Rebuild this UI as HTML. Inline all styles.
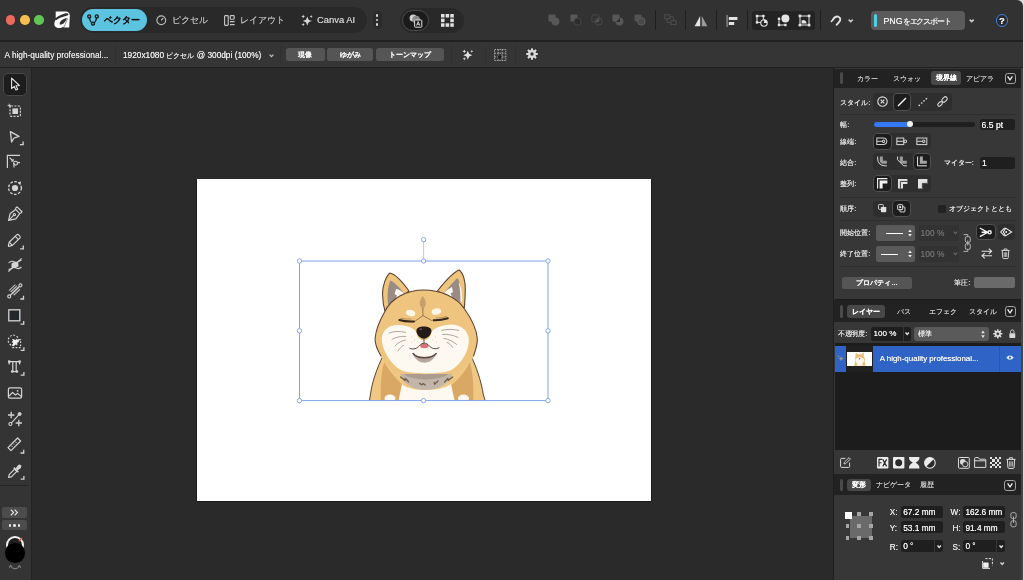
<!DOCTYPE html>
<html lang="ja">
<head>
<meta charset="utf-8">
<title>Affinity</title>
<style>
*{box-sizing:border-box;margin:0;padding:0}
html,body{width:1024px;height:580px;overflow:hidden;background:#2a2a2a}
body{position:relative;font-family:"Liberation Sans",sans-serif;font-size:7.4px;color:#dcdcdc;line-height:1}
.a{position:absolute}
.t{position:absolute;white-space:nowrap;line-height:10px;height:10px;text-shadow:0 0 .45px}
svg{position:absolute;overflow:visible}
/* top bars */
#titlebar{left:0;top:0;width:1022.6px;height:40px;background:#323232;border-top-right-radius:6px}
#sep1{left:0;top:40px;width:1022.6px;height:1.8px;background:#202020}
#ctxbar{left:0;top:41.8px;width:1022.6px;height:25.2px;background:#353535}
#sep2{left:0;top:66.6px;width:1022.6px;height:1.4px;background:#202020}
#edge{left:1016px;top:0;width:8px;height:580px;background:#dcdce2}
/* left tools */
#tools{left:0;top:68px;width:32px;height:512px;background:#343434;border-right:1px solid #222}
/* right panels */
#rp{left:833px;top:68px;width:189.6px;height:512px;background:#373737;border-left:1.6px solid #1e1e1e}
.tabbar{left:834px;width:188.6px;background:#222}
.seltab{background:#484848;border-radius:3px}
.grip{width:3px;background:#4a4a4a;border-radius:1.5px}
.colbtn{width:11.5px;height:11px;border:1.1px solid #a4a4a4;border-radius:2.8px}
.hr{left:840px;width:176px;height:1px;background:#2e2e2e}
.grp{background:#2e2e2e;border-radius:4px}
.selb{background:#1d1d1d;border:1px solid #505050;border-radius:4px}
.vbox{background:#1f1f1f;border-radius:2.5px}
.btn{background:#585858;border-radius:2.5px}
.lbl{color:#e6e6e6}
</style>
</head>
<body>
<div id="root" style="position:absolute;left:0;top:0;width:1024px;height:580px;will-change:transform">
<!-- ===== bars ===== -->
<div class="a" id="edge"></div>
<div class="a" id="titlebar"></div>
<div class="a" id="sep1"></div>
<div class="a" id="ctxbar"></div>
<div class="a" id="sep2"></div>

<!-- traffic lights -->
<div class="a" style="left:5.8px;top:15.3px;width:9.6px;height:9.6px;border-radius:50%;background:#ec6a5e"></div>
<div class="a" style="left:20px;top:15.3px;width:9.6px;height:9.6px;border-radius:50%;background:#f4bf4f"></div>
<div class="a" style="left:34.3px;top:15.3px;width:9.6px;height:9.6px;border-radius:50%;background:#61c554"></div>
<!-- logo -->
<svg style="left:54.2px;top:11.2px" width="17" height="17" viewBox="0 0 17 17"><path d="M1.7 0.6 L11 0.4 C14.6 0.4 16.1 2.4 15.8 5.5 L15.2 16.6 L9.9 16.6 L9.4 15.8 C7.5 17.1 5 17.3 3 16.7 C0.5 15.9 -0.2 13.4 0.7 11 C1.2 9.4 1.8 8.2 2.6 7.2 L1.7 7.2 Z" fill="#fff"/><path d="M0.8 8 C4 4.6 10 2 13.4 2.2 C14.8 2.4 14.6 3.8 13.4 4.4 C9 5.4 4.5 7.2 2.2 9.2 Z" fill="#323232"/><path d="M5.6 12.6 C5.8 10 9.6 7.6 13 7 C12.2 10 10 12.8 7.4 13.6 C6.2 13.9 5.5 13.4 5.6 12.6 Z" fill="#323232"/><path d="M13.8 7.2 L9.8 16.6" stroke="#323232" stroke-width="0.5" fill="none"/></svg>
<!-- persona pill -->
<div class="a" style="left:79.5px;top:7px;width:287px;height:26px;border-radius:13px;background:#292929"></div>
<div class="a" style="left:81.5px;top:9px;width:65px;height:22px;border-radius:11px;background:#5cc4e0"></div>
<svg style="left:87px;top:14px" width="12" height="12" viewBox="0 0 12 12" fill="none" stroke="#1c1c1c" stroke-width="1.4"><circle cx="2.2" cy="2.4" r="1.5"/><circle cx="9.8" cy="2.4" r="1.5"/><circle cx="6" cy="9.6" r="1.5"/><path d="M2.4 4 Q3 7.5 4.8 8.8 M9.6 4 Q9 7.5 7.2 8.8"/></svg>
<div class="t" style="left:103.5px;top:15px;font-size:8.6px;font-weight:bold;color:#151515">ベクター</div>
<svg style="left:156px;top:15px" width="10.5" height="10.5" viewBox="0 0 11 11" fill="none" stroke="#bcbcbc" stroke-width="1.2"><circle cx="5.5" cy="5.5" r="4.6"/><path d="M5.5 5.5 L7.6 3.2"/></svg>
<div class="t" style="left:172px;top:15px;font-size:8.5px;color:#b4b4b4">ピクセル</div>
<svg style="left:224px;top:14.5px" width="11" height="11" viewBox="0 0 11 11" fill="none" stroke="#c8c8c8" stroke-width="1.1"><rect x="0.6" y="0.6" width="3.6" height="9.8" rx="0.6"/><rect x="6.2" y="0.6" width="4" height="3.6" rx="0.6"/><path d="M6 6.6 H10.6 M6 9.6 H10.6"/></svg>
<div class="t" style="left:240px;top:15px;font-size:8.5px;color:#b4b4b4">レイアウト</div>
<svg style="left:300.5px;top:14.5px" width="12" height="12" viewBox="0 0 12 12" fill="#d6d6d6"><path d="M6.30 1.60 L7.61 4.69 L10.70 6.00 L7.61 7.31 L6.30 10.40 L4.99 7.31 L1.90 6.00 L4.99 4.69 Z"/><path d="M2.20 -0.50 L2.79 0.91 L4.20 1.50 L2.79 2.09 L2.20 3.50 L1.61 2.09 L0.20 1.50 L1.61 0.91 Z"/><path d="M10.20 0.00 L10.65 1.05 L11.70 1.50 L10.65 1.95 L10.20 3.00 L9.75 1.95 L8.70 1.50 L9.75 1.05 Z"/><path d="M2.20 8.00 L2.68 9.12 L3.80 9.60 L2.68 10.08 L2.20 11.20 L1.72 10.08 L0.60 9.60 L1.72 9.12 Z"/></svg>
<div class="t" style="left:317px;top:15px;font-size:9.4px;color:#c8c8c8">Canva AI</div>
<!-- kebab -->
<div class="a" style="left:372.5px;top:11px;width:9px;height:18px;border-radius:4.5px;background:#2a2a2a"></div>
<div class="a" style="left:375.6px;top:14px;width:2.8px;height:2.8px;border-radius:50%;background:#d8d8d8"></div>
<div class="a" style="left:375.6px;top:18.6px;width:2.8px;height:2.8px;border-radius:50%;background:#d8d8d8"></div>
<div class="a" style="left:375.6px;top:23.2px;width:2.8px;height:2.8px;border-radius:50%;background:#d8d8d8"></div>
<!-- second pill -->
<div class="a" style="left:399.5px;top:7.5px;width:64.5px;height:25px;border-radius:12.5px;background:#292929"></div>
<div class="a" style="left:401.5px;top:9.5px;width:27.5px;height:21.5px;border-radius:10.7px;background:#1b1b1b;border:1px solid #4c4c4c"></div>
<svg style="left:408.5px;top:13.5px" width="14" height="14" viewBox="0 0 14 14"><circle cx="4.2" cy="4" r="3.6" fill="#d0d0d0"/><circle cx="7.2" cy="5.6" r="3.8" fill="#8a8a8a"/><rect x="5.6" y="6" width="7.2" height="7.2" rx="0.8" fill="#1b1b1b" stroke="#e0e0e0" stroke-width="1"/><path d="M7.6 11.6 L9.2 7.6 L10.8 11.6 M8.2 10.3 H10.2" stroke="#e0e0e0" stroke-width="0.9" fill="none"/></svg>
<svg style="left:441px;top:13.8px" width="12.8" height="12.8" viewBox="0 0 13.5 13.5" fill="#e2e2e2"><rect x="0" y="0" width="3.7" height="3.7"/><rect x="4.9" y="0" width="3.7" height="3.7"/><rect x="9.8" y="0" width="3.7" height="3.7"/><rect x="0" y="4.9" width="3.7" height="3.7"/><rect x="9.8" y="4.9" width="3.7" height="3.7"/><rect x="0" y="9.8" width="3.7" height="3.7"/><rect x="4.9" y="9.8" width="3.7" height="3.7"/><rect x="9.8" y="9.8" width="3.7" height="3.7"/></svg>
<!-- disabled boolean ops -->
<svg style="left:548px;top:14px" width="12" height="12" viewBox="0 0 12 12" fill="#585858"><rect x="0.5" y="0.5" width="7" height="7" rx="1"/><circle cx="7.4" cy="7.4" r="4"/></svg>
<svg style="left:569.5px;top:14px" width="12" height="12" viewBox="0 0 12 12"><rect x="0.5" y="0.5" width="7" height="7" rx="1" fill="#585858"/><circle cx="7.6" cy="7.6" r="3.6" fill="#2d2d2d" stroke="#4a4a4a" stroke-width="0.9"/></svg>
<svg style="left:591px;top:14px" width="12" height="12" viewBox="0 0 12 12"><rect x="0.9" y="0.9" width="7" height="7" rx="1" fill="none" stroke="#4c4c4c" stroke-width="0.9"/><circle cx="7.6" cy="7.6" r="3.6" fill="none" stroke="#4c4c4c" stroke-width="0.9"/><path d="M4.2 7.8 L7.8 4.2 V7.8 Z" fill="#5c5c5c"/></svg>
<svg style="left:612px;top:14px" width="12" height="12" viewBox="0 0 12 12"><rect x="0.5" y="0.5" width="7" height="7" rx="1" fill="#585858"/><circle cx="7.4" cy="7.4" r="4" fill="#585858"/><path d="M4 7.9 L7.9 4 V7.9 Z" fill="#2d2d2d"/></svg>
<svg style="left:633.5px;top:14px" width="12" height="12" viewBox="0 0 12 12"><rect x="0.5" y="0.5" width="7" height="7" rx="1" fill="#525252"/><circle cx="7.4" cy="7.4" r="3.8" fill="#4a4a4a" stroke="#606060" stroke-width="0.9"/></svg>
<div class="a" style="left:654.5px;top:10px;width:1px;height:20px;background:#1f1f1f"></div>
<svg style="left:664px;top:14px" width="13" height="12" viewBox="0 0 13 12" fill="none" stroke="#4e4e4e" stroke-width="1"><rect x="0.8" y="0.8" width="5" height="4" /><rect x="7" y="6.6" width="5" height="4"/><path d="M6 2.8 H9.4 V6 M3.2 5 V8.6 H6.6"/></svg>
<div class="a" style="left:685px;top:10px;width:1px;height:20px;background:#1f1f1f"></div>
<svg style="left:694px;top:14.8px" width="14" height="12.4" viewBox="0 0 14 12"><path d="M6.2 0.8 V11 H0.6 Z" fill="#e4e4e4"/><path d="M7.8 0.8 V11 H13.4 Z" fill="#9a9a9a"/></svg>
<div class="a" style="left:716px;top:10px;width:1px;height:20px;background:#1f1f1f"></div>
<svg style="left:726px;top:14.6px" width="12" height="12" viewBox="0 0 12 12" fill="#e4e4e4"><rect x="0.4" y="0" width="1.4" height="12" fill="#8c8c8c"/><rect x="2.8" y="2" width="8.6" height="3"/><rect x="2.8" y="7" width="5.4" height="3"/></svg>
<div class="a" style="left:746.5px;top:10px;width:1px;height:20px;background:#1f1f1f"></div>
<!-- snapping group -->
<div class="a" style="left:752px;top:11px;width:62.5px;height:19px;border-radius:3px;background:#232323"></div>
<svg style="left:754.5px;top:14px" width="13" height="13" viewBox="0 0 13 13"><rect x="2" y="2" width="6.4" height="6.4" fill="none" stroke="#e4e4e4" stroke-width="1"/><g fill="#e4e4e4"><rect x="0.8" y="0.8" width="2.4" height="2.4"/><rect x="7.2" y="0.8" width="2.4" height="2.4"/><rect x="0.8" y="7.2" width="2.4" height="2.4"/></g><circle cx="9" cy="9" r="3.2" fill="#232323" stroke="#e4e4e4" stroke-width="1.1"/><path d="M9 9 L9 5.8 A3.2 3.2 0 0 1 12.2 9 Z" fill="#e4e4e4"/></svg>
<svg style="left:776.5px;top:13.5px" width="13" height="13" viewBox="0 0 13 13"><path d="M2 4.6 V11 H8.4" fill="none" stroke="#e4e4e4" stroke-width="1"/><g fill="#e4e4e4"><rect x="0.8" y="3.6" width="2.4" height="2.4"/><rect x="0.8" y="9.8" width="2.4" height="2.4"/><rect x="7.2" y="9.8" width="2.4" height="2.4"/><circle cx="8.4" cy="4.4" r="4"/></g></svg>
<svg style="left:798px;top:13.5px" width="13" height="13" viewBox="0 0 13 13"><rect x="2" y="2" width="9" height="9" fill="none" stroke="#e4e4e4" stroke-width="1"/><g fill="#e4e4e4"><rect x="0.6" y="0.6" width="2.6" height="2.6"/><rect x="9.8" y="0.6" width="2.6" height="2.6"/><rect x="0.6" y="9.8" width="2.6" height="2.6"/><rect x="9.8" y="9.8" width="2.6" height="2.6"/><path d="M3.6 9.4 V6.4 A3.4 3.4 0 0 1 8.6 9.4 Z"/></g></svg>
<div class="a" style="left:820px;top:10px;width:1px;height:20px;background:#1f1f1f"></div>
<svg style="left:830px;top:14.8px" width="12" height="12" viewBox="0 0 12 12" fill="none" stroke="#e0e0e0" stroke-width="1.9" stroke-linecap="round"><path d="M3 4.6 Q4.8 1 8 1.6 Q11.4 2.8 9.8 6 Q8.6 7.8 6.6 9.8"/><path d="M1.4 6.4 L2.8 5" stroke-width="1.6"/></svg>
<svg style="left:847.5px;top:18.5px" width="5.4" height="3.6" viewBox="0 0 6 4" fill="none" stroke="#d0d0d0" stroke-width="1.7"><path d="M0.8 0.7 L3 3 L5.2 0.7"/></svg>
<!-- export -->
<div class="a" style="left:871px;top:11px;width:93.5px;height:19px;border-radius:4px;background:#5b5b5b"></div>
<div class="a" style="left:874px;top:14px;width:3px;height:13px;border-radius:1.5px;background:#4fd0e6"></div>
<div class="t" style="left:883.5px;top:15.5px;font-size:8.8px;color:#f0f0f0">PNG<span style="font-size:8.2px;letter-spacing:-1.05px">をエクスポート</span></div>
<svg style="left:968.5px;top:18.5px" width="5.4" height="3.6" viewBox="0 0 6 4" fill="none" stroke="#d0d0d0" stroke-width="1.7"><path d="M0.8 0.7 L3 3 L5.2 0.7"/></svg>
<!-- help -->
<div class="a" style="left:995.5px;top:14.3px;width:12.4px;height:12.4px;border-radius:50%;border:1.3px solid #3f7fe6;background:#2a2a2a"></div>
<div class="t" style="left:999px;top:15.6px;font-size:9.5px;font-weight:bold;color:#f0f0f0">?</div>


<div class="t" style="left:4.5px;top:50px;font-size:8.3px;color:#e2e2e2">A high-quality professional...</div>
<div class="a" style="left:115px;top:46px;width:1px;height:18px;background:#2f2f2f"></div>
<div class="t" style="left:123px;top:50px;font-size:8.3px;color:#e8e8e8">1920x1080 <span style="font-size:7.4px">ピクセル</span> @ 300dpi (100%)</div>
<svg style="left:268.5px;top:53.5px" width="5" height="3.5" viewBox="0 0 5 3.5" fill="none" stroke="#c8c8c8" stroke-width="1.1"><path d="M0.6 0.6 L2.5 2.6 L4.4 0.6"/></svg>
<div class="a" style="left:279.5px;top:46px;width:1px;height:18px;background:#2f2f2f"></div>
<div class="a btn" style="left:286px;top:47.5px;width:38.7px;height:13.3px;background:#555"></div>
<div class="t" style="left:286px;top:50px;width:38.7px;text-align:center;font-size:7.3px;font-weight:bold;color:#f0f0f0">現像</div>
<div class="a btn" style="left:327px;top:47.5px;width:46px;height:13.3px;background:#555"></div>
<div class="t" style="left:327px;top:50px;width:46px;text-align:center;font-size:7.3px;font-weight:bold;color:#f0f0f0">ゆがみ</div>
<div class="a btn" style="left:375.5px;top:47.5px;width:68px;height:13.3px;background:#555"></div>
<div class="t" style="left:375.5px;top:50px;width:68px;text-align:center;font-size:7.3px;font-weight:bold;color:#f0f0f0">トーンマップ</div>
<div class="a" style="left:450.5px;top:46px;width:1px;height:18px;background:#2f2f2f"></div>
<svg style="left:460.5px;top:48.5px" width="12" height="12" viewBox="0 0 12 12" fill="#e0e0e0"><path d="M6.80 1.70 L8.14 4.86 L11.30 6.20 L8.14 7.54 L6.80 10.70 L5.46 7.54 L2.30 6.20 L5.46 4.86 Z"/><path d="M3.30 0.40 L3.90 1.70 L5.20 2.30 L3.90 2.90 L3.30 4.20 L2.70 2.90 L1.40 2.30 L2.70 1.70 Z"/><path d="M10.80 0.90 L11.25 1.85 L12.20 2.30 L11.25 2.75 L10.80 3.70 L10.35 2.75 L9.40 2.30 L10.35 1.85 Z"/><path d="M3.30 8.20 L3.81 9.29 L4.90 9.80 L3.81 10.31 L3.30 11.40 L2.79 10.31 L1.70 9.80 L2.79 9.29 Z"/></svg>
<div class="a" style="left:484.5px;top:46px;width:1px;height:18px;background:#2f2f2f"></div>
<svg style="left:493.8px;top:49px" width="12.4" height="12" viewBox="0 0 12.4 12" fill="none" stroke="#a8a8a8" stroke-width="1" stroke-dasharray="1.5 1"><path d="M0.5 0.5 H11.9 V11.5 H0.5 Z M4.3 0.5 V11.5 M8.1 0.5 V11.5 M0.5 4.2 H11.9 M0.5 7.9 H11.9"/><rect x="3.8" y="6.4" width="3.2" height="3.2" fill="#1e1e1e" stroke="none"/></svg>
<div class="a" style="left:514.5px;top:46px;width:1px;height:18px;background:#2f2f2f"></div>
<svg style="left:526px;top:48px" width="12" height="12" viewBox="0 0 12 12"><g fill="#dcdcdc"><circle cx="6" cy="6" r="3.9"/><g id="gt"><rect x="5" y="0.2" width="2" height="11.6" rx="0.5"/></g><rect x="5" y="0.2" width="2" height="11.6" rx="0.5" transform="rotate(45 6 6)"/><rect x="5" y="0.2" width="2" height="11.6" rx="0.5" transform="rotate(90 6 6)"/><rect x="5" y="0.2" width="2" height="11.6" rx="0.5" transform="rotate(135 6 6)"/></g><circle cx="6" cy="6" r="1.7" fill="#323232"/></svg>

<!-- ===== left tools ===== -->
<div class="a" id="tools"></div>

<div class="a" style="left:2.6px;top:72.8px;width:24px;height:23.2px;border-radius:5px;background:#1d1d1d;border:1.2px solid #484848"></div>
<svg style="left:6.7px;top:76.3px" width="16" height="16" viewBox="0 0 16 16"><path d="M4.6 2.2 L4.6 12.6 L7.2 10.4 L8.9 14 L10.7 13.2 L9 9.7 L12.4 9.5 Z" fill="#1d1d1d" stroke="#e2e2e2" stroke-width="1.1" stroke-linejoin="round"/></svg><svg style="left:6.7px;top:102.9px" width="16" height="16" viewBox="0 0 16 16"><rect x="3" y="3" width="10.4" height="10.4" rx="1.2" fill="none" stroke="#d4d4d4" stroke-width="1.2" stroke-dasharray="2 1.3"/><rect x="5.4" y="5.4" width="5.6" height="5.6" fill="#d4d4d4"/><path d="M0.6 2.4 H4 M2.3 0.7 V4.1" stroke="#d4d4d4" stroke-width="0.9"/></svg><svg style="left:6.7px;top:128.7px" width="16" height="16" viewBox="0 0 16 16"><path d="M3.4 2.6 L12 7.4 L7 9 L4.6 13 Z" fill="none" stroke="#d4d4d4" stroke-width="1.3" stroke-linejoin="round"/><path d="M16.1 12.4 V15.6 H12.9" fill="none" stroke="#d4d4d4" stroke-width="1.3"/></svg><svg style="left:4.9px;top:153.2px" width="16" height="16" viewBox="0 0 16 16"><path d="M2.4 15 V2.4 H15" fill="none" stroke="#d4d4d4" stroke-width="1.2"/><path d="M4.6 4.6 L8 8" stroke="#d4d4d4" stroke-width="1.1"/><path d="M8.6 5.6 V8.6 H5.6 Z" fill="#d4d4d4"/><circle cx="10.6" cy="10.2" r="1.9" fill="none" stroke="#d4d4d4" stroke-width="1.1"/><path d="M9 10 V14.6 M12.4 9.6 H15" stroke="#d4d4d4" stroke-width="1.1"/></svg><svg style="left:6.7px;top:179.6px" width="16" height="16" viewBox="0 0 16 16"><circle cx="8" cy="8" r="6.4" fill="none" stroke="#d4d4d4" stroke-width="1.3" stroke-dasharray="2.6 1.5"/><circle cx="8" cy="8" r="3.1" fill="#d4d4d4"/><path d="M10.6 2.2 L14 1.4 L13.4 4.8 Z" fill="#d4d4d4"/></svg><svg style="left:6.7px;top:206.0px" width="16" height="16" viewBox="0 0 16 16"><g fill="none" stroke="#d4d4d4" stroke-width="1.2" stroke-linejoin="round"><path d="M1.6 14.4 L3.2 7.4 L8.6 3.4 L12.8 7.6 L8.8 12.8 Z"/><path d="M1.6 14.4 L6.6 9.4"/><circle cx="7.4" cy="8.6" r="1.1"/><path d="M8.2 2.6 L10 0.9 L15 5.8 L13.4 7.6"/></g></svg><svg style="left:6.7px;top:232.6px" width="16" height="16" viewBox="0 0 16 16"><g fill="none" stroke="#d4d4d4" stroke-width="1.2" stroke-linejoin="round"><path d="M1.4 12.6 L2.2 9.2 L9.6 1.9 Q10.6 1 11.6 1.9 L12.8 3.1 Q13.7 4.1 12.8 5.1 L5.4 12.4 L1.8 13.4 Z"/><path d="M2.4 9.4 L5.2 12.2 M8.2 3.4 L11.2 6.4"/></g><path d="M16.3 12.6 V15.8 H13.1" fill="none" stroke="#d4d4d4" stroke-width="1.3"/></svg><svg style="left:6.7px;top:257.3px" width="16" height="16" viewBox="0 0 16 16"><g fill="none" stroke="#d4d4d4" stroke-width="1.1"><path d="M1.6 6 Q4 3.4 6.2 4.6 Q9 6.2 11 4.6 Q12.6 3.4 14.4 3.4"/><path d="M1.6 12.4 Q3.4 12.6 5 11.2 Q7 9.6 9.8 11.2 Q12 12.4 14.4 10"/><path d="M1.4 14.6 L14.6 1.4" stroke-width="1.2"/></g><path d="M4.6 6.2 Q8 4.6 11.2 6 L11.6 9.6 Q8 11.4 4.4 9.8 Z" fill="#d4d4d4"/></svg><svg style="left:6.7px;top:282.8px" width="16" height="16" viewBox="0 0 16 16"><g stroke="#d4d4d4" fill="none"><path d="M2 7.6 L8.4 1.6 M3.6 9 L10 3 M5.2 10.6 L11.6 4.6 M6.6 12.2 L13 6.2" stroke-width="1.25" opacity="0.8"/><path d="M2.6 13 L13.2 2.6" stroke-width="1.2"/><circle cx="2.2" cy="13.4" r="1.5" fill="#343434" stroke-width="1.1"/><circle cx="13.4" cy="2.4" r="1.5" fill="#343434" stroke-width="1.1"/></g><path d="M16.5 12.8 V16.0 H13.3" fill="none" stroke="#d4d4d4" stroke-width="1.3"/></svg><svg style="left:6.7px;top:308.2px" width="16" height="16" viewBox="0 0 16 16"><rect x="1.8" y="1.8" width="11" height="11" fill="#22282a" stroke="#d4d4d4" stroke-width="1.3"/><path d="M16.7 13.0 V16.2 H13.5" fill="none" stroke="#d4d4d4" stroke-width="1.3"/></svg><svg style="left:6.7px;top:334.2px" width="16" height="16" viewBox="0 0 16 16"><circle cx="6.4" cy="6.4" r="5.2" fill="none" stroke="#d4d4d4" stroke-width="1.2" stroke-dasharray="1.8 1.6"/><rect x="5.6" y="5.6" width="8" height="8" fill="none" stroke="#d4d4d4" stroke-width="1.1" stroke-dasharray="1.8 1.4"/><path d="M6 6 H11.4 A5.4 5.4 0 0 1 6 11.4 Z" fill="#f0f0f0"/><path d="M16.9 13.2 V16.4 H13.7" fill="none" stroke="#d4d4d4" stroke-width="1.3"/></svg><svg style="left:6.7px;top:359.4px" width="16" height="16" viewBox="0 0 16 16"><g fill="#d4d4d4"><rect x="1" y="1.4" width="2.4" height="2.4"/><rect x="11.4" y="1.4" width="2.4" height="2.4"/><rect x="4" y="11.4" width="2.2" height="2.2"/><rect x="9" y="11.4" width="2.2" height="2.2"/></g><path d="M2.2 2.6 H12.6 M2.2 2.6 V5.6 M12.6 2.6 V5.6 M5.8 3 V12 M9.2 3 V12 M5 12.6 H10.2" stroke="#d4d4d4" stroke-width="1.2" fill="none"/><path d="M16.9 13.0 V16.2 H13.7" fill="none" stroke="#d4d4d4" stroke-width="1.3"/></svg><svg style="left:6.7px;top:385.0px" width="16" height="16" viewBox="0 0 16 16"><g fill="none" stroke="#d4d4d4" stroke-width="1.2" stroke-linejoin="round"><rect x="1.4" y="2.8" width="13.2" height="10.4" rx="1.4"/><path d="M2 11 L5.6 7.4 L8.4 10 L10.6 8.4 L14.2 11.4"/></g><circle cx="10.6" cy="5.8" r="0.9" fill="#d4d4d4"/></svg><svg style="left:6.7px;top:410.8px" width="16" height="16" viewBox="0 0 16 16"><g stroke="#d4d4d4" stroke-width="1.3" fill="none"><path d="M1 4 H7.4 M4.2 0.8 V7.2"/><path d="M8.6 12 H15 M11.8 8.8 V15.2"/><path d="M4 12.4 L12 3.6" stroke-width="1.1"/><circle cx="3.4" cy="13" r="1.5" fill="#343434" stroke-width="1.1"/><circle cx="12.6" cy="3" r="1.5" fill="#d4d4d4" stroke-width="1"/></g></svg><svg style="left:6.7px;top:436.6px" width="16" height="16" viewBox="0 0 16 16"><g fill="none" stroke="#d4d4d4" stroke-width="1.2" stroke-linejoin="round"><path d="M1 10.6 L10.6 1 L13.6 4 L4 13.6 Z"/><path d="M4.2 8.6 L5.6 10 M6.2 6.6 L7.2 7.6 M8.2 4.6 L9.6 6" stroke-width="1"/></g><path d="M16.7 12.8 V16.0 H13.5" fill="none" stroke="#d4d4d4" stroke-width="1.3"/></svg><svg style="left:6.7px;top:462.5px" width="16" height="16" viewBox="0 0 16 16"><g fill="none" stroke="#d4d4d4" stroke-width="1.2" stroke-linejoin="round"><path d="M1.6 14.4 L2.2 11.6 L7.6 6.2 L9.8 8.4 L4.4 13.8 Z"/><path d="M6.8 4.6 L11.4 9.2" stroke-width="1.5"/></g><path d="M8.6 5.4 L10.8 2.4 Q12.4 0.9 13.8 2.2 Q15.1 3.6 13.6 5.2 L10.6 7.4 Z" fill="#d4d4d4"/><path d="M16.9 13.0 V16.2 H13.7" fill="none" stroke="#d4d4d4" stroke-width="1.3"/></svg>
<div class="a" style="left:0;top:484.6px;width:28px;height:1px;background:#242424"></div>
<div class="a" style="left:1.7px;top:507px;width:25.6px;height:10.6px;border-radius:2px;background:#4c4c4c"></div>
<svg style="left:10px;top:508.8px" width="9" height="7" viewBox="0 0 9 7" fill="none" stroke="#e6e6e6" stroke-width="1.2"><path d="M0.8 0.6 L3.6 3.5 L0.8 6.4 M4.6 0.6 L7.4 3.5 L4.6 6.4"/></svg>
<div class="a" style="left:1.7px;top:520.3px;width:25.6px;height:10.2px;border-radius:2px;background:#4c4c4c"></div>
<div class="a" style="left:8.9px;top:524.1px;width:2.6px;height:2.6px;border-radius:50%;background:#e6e6e6"></div>
<div class="a" style="left:13.3px;top:524.1px;width:2.6px;height:2.6px;border-radius:50%;background:#e6e6e6"></div>
<div class="a" style="left:17.7px;top:524.1px;width:2.6px;height:2.6px;border-radius:50%;background:#e6e6e6"></div>
<div class="a" style="left:5.6px;top:535.6px;width:18.2px;height:18.2px;border-radius:50%;background:#1e1e1e;border:2.2px solid #f2f2f2"></div>
<svg style="left:17.5px;top:537px" width="5" height="5" viewBox="0 0 5 5"><path d="M0.6 4.4 L4.4 0.6" stroke="#e0483e" stroke-width="1.2"/></svg>
<div class="a" style="left:5px;top:543.4px;width:19.6px;height:19.6px;border-radius:50%;background:#000"></div>
<svg style="left:9px;top:565px" width="12" height="6" viewBox="0 0 12 6" fill="none" stroke="#8c8c8c" stroke-width="1"><path d="M1.4 1.2 Q6 6.4 10.6 1.2"/><path d="M0.6 2.8 L1.2 0.6 L3.2 1.4 M8.8 1.4 L10.8 0.6 L11.4 2.8"/></svg>

<!-- ===== canvas ===== -->

<div class="a" style="left:195.5px;top:178.5px;width:456.7px;height:323.8px;background:#1c1c1c"></div>
<div class="a" style="left:196.5px;top:179.4px;width:454.7px;height:321.8px;background:#fff"></div>
<svg style="left:0;top:0" width="1024" height="580" viewBox="0 0 1024 580">
<defs><clipPath id="dc"><rect x="360" y="262" width="135" height="138.4"/></clipPath></defs>
<g clip-path="url(#dc)" stroke-linejoin="round" stroke-linecap="round">
<!-- body -->
<path d="M383 356 C377 368,372 382,370.4 395 L369 403 L486 403 L483.4 395 C481 380,476 366,471 356 Z" fill="#f0c884" stroke="#5a4232" stroke-width="1"/>
<path d="M384 362 C390 372,397 380,404 386 L398 403 L381 403 C380 388,381 374,384 362 Z" fill="#d9a865"/>
<path d="M470 362 C465 372,458 380,450 386 L456 403 L473 403 C474 388,473 374,470 362 Z" fill="#d9a865"/>
<path d="M402 384 C410 392,440 392,451 384 L455 403 L398 403 Z" fill="#fdf9f1"/>
<ellipse cx="390" cy="398.5" rx="5.5" ry="4" fill="#fdf9f1"/>
<ellipse cx="463.5" cy="398.5" rx="5.5" ry="4" fill="#fdf9f1"/>
<!-- neck shadow -->
<path d="M399 366 C408 375,444 375,453.6 366 C453.4 379,445 389.4,425.5 390 C407 389.4,399.4 379,399 366 Z" fill="#c2b5a9"/>
<path d="M399.6 367 C409 376,443 376,453 367 C452 373,446 379,425.5 379.4 C406 379,400.6 373,399.6 367 Z" fill="#ab9c90"/>
<path d="M400.6 377 l4.4 3.4 l0.4 -2 l3.2 3.6 M452.6 377 l-4.4 3.4 l-0.4 -2 l-3.2 3.6 M419.6 383.4 l2 1.4 l1.6 -1.2 l2 1.4 M438 381 l-3.4 3.2 l-0.4 -1.8" fill="none" stroke="#75604f" stroke-width="1.4"/>
<!-- ears -->
<path d="M389.9 273 C386 276,382.4 286,382.5 294 C382.6 301,383.6 307,385.4 312.5 L409 291 C404 284,396 274.5,389.9 273 Z" fill="#eec47e" stroke="#5a4232" stroke-width="1.1"/>
<path d="M390.4 280.6 C387.6 286,386.6 298,388.6 307 L404 293.4 C400 288,394 282,390.4 280.6 Z" fill="#988c85"/>
<path d="M396 289 L394.6 294 L397 295.4 L395.4 300.5 L404 293.4 C401.5 291,399 289.6,396 289 Z" fill="#fdf9f1"/>
<path d="M459.2 270 C463.4 273,465.6 282,465.3 290 C465.2 297,464.8 303,464.3 308 L437.4 291 C443 284,452 272.5,459.2 270 Z" fill="#eec47e" stroke="#5a4232" stroke-width="1.1"/>
<path d="M457.8 278 C460.6 284,462 294,461.2 302.4 L444.4 292.8 C448 288,453.6 281,457.8 278 Z" fill="#988c85"/>
<path d="M452 287 L453 292 L450.6 293.4 L452.4 297.6 L444.4 292.8 C446.6 290.4,449 288.4,452 287 Z" fill="#fdf9f1"/>
<path d="M458.6 282 C460 288,460.6 295,460.4 301.4 L462 302 C462.6 295,461.4 286,458.6 282 Z" fill="#fdf9f1"/>
<!-- head -->
<path d="M384.6 312 C391 298,407 290,423.5 290 C440 290,457 297,464.5 309 C471 318,476.4 328,477.3 338.5 C477.8 346,475.6 352,472.6 358.6 C467 367,457 373,451 374 L400.6 374 C393 372,386.6 366,382.5 358.6 C378.6 352,374.6 345,375.1 338.5 C376 328,380 320,384.6 312 Z" fill="#eec47e"/>
<path d="M381 356 C378 351,374.7 345,375.1 338.5 C376 328,380 320,384.6 312 C391 298,407 290,423.5 290 C440 290,457 297,464.5 309 C471 318,476.4 328,477.3 338.5 C477.7 345,475 351,473.6 356" fill="none" stroke="#5a4232" stroke-width="1.05"/>
<!-- white mask -->
<path d="M381.8 340 C381.4 331,388 325.4,397 325 C404 324.8,410 326.6,414 329.4 C415.6 330.6,416.2 332,416.6 333.4 C417.4 337,420 340,423.8 340.2 C427.6 340,430.4 337,431.2 333.4 C431.6 332,432.4 330.4,434 329.2 C438 326.4,444 324.6,451 324.4 C460 324.4,468.4 330,468.8 339.4 C469.4 351,461 364,452 369.6 C444 374.8,408 374.8,400 369.6 C391 364,382.4 351,381.8 340 Z" fill="#fdf9f1"/>
<!-- forehead mark -->
<path d="M422.8 296 C420 299.4,419 303.4,420.4 306 C421.4 307.8,422.4 308.8,422.8 311.4 C423.2 308.8,424.2 307.8,425.2 306 C426.6 303.4,425.6 299.4,422.8 296 Z" fill="#c79f68"/>
<path d="M422.8 309 L423 315.6 L414.4 321.6 M423 315.6 L431.4 320.4" fill="none" stroke="#7a5a3c" stroke-width="0.7"/>
<!-- brows -->
<ellipse cx="410.6" cy="313" rx="4.8" ry="3.1" fill="#fdf6e6" transform="rotate(14 410.6 313)"/>
<ellipse cx="436.4" cy="311.6" rx="4.8" ry="3.1" fill="#fdf6e6" transform="rotate(-14 436.4 311.6)"/>
<!-- eyes -->
<path d="M399.4 320 C404 321.4,409 321.6,414 321.4" fill="none" stroke="#33251c" stroke-width="2"/><path d="M400.6 318.4 C404 319,408 319.2,411 319" fill="none" stroke="#8a6a44" stroke-width="0.6"/>
<path d="M433.6 320.2 C438.6 320.4,443.4 319.6,447.8 318.2" fill="none" stroke="#33251c" stroke-width="2"/><path d="M436 318 C440 318,443.4 317.4,446.4 316.4" fill="none" stroke="#8a6a44" stroke-width="0.6"/>
<!-- nose -->
<path d="M416.4 330.6 C416.6 327.4,420 326.4,423.8 326.4 C427.6 326.4,431.2 327.4,431.4 330.6 C431.6 334.4,428 338.6,423.8 338.8 C419.8 338.6,416.2 334.4,416.4 330.6 Z" fill="#241a17"/>
<ellipse cx="420.8" cy="329.2" rx="1.6" ry="0.9" fill="#5d4c46"/>
<path d="M424 338.8 V343" stroke="#4a3830" stroke-width="0.8"/>
<!-- tongue+mouth -->
<ellipse cx="424.4" cy="346" rx="4.2" ry="2.2" fill="#d7737a"/>
<path d="M410 348.4 C413.6 350,417 348.4,419.4 345.8 C421 344,422.6 343,424.2 343.2 C426 343,427.6 344,429.2 345.8 C431.6 348.6,435.4 349.8,439 347.8" fill="none" stroke="#4a3830" stroke-width="0.95"/>
<!-- chin -->
<path d="M413 354 C418 357.6,431 357.6,436 354 C434.6 358.6,430 362.6,424.4 362.8 C419 362.6,414.4 358.6,413 354 Z" fill="#b7a89e"/>
<path d="M413 353.6 C416 357,420 358,424.4 357.8 C429 358,433 357,436.2 353.6" fill="none" stroke="#5a4740" stroke-width="1.5"/>
<!-- whiskers -->
<g fill="none" stroke="#9a8f88" stroke-width="0.8">
<path d="M389 333 C394 331,400 331,405.6 332.4"/><path d="M392 339.4 C396 337,401 336,405.6 336.4"/><path d="M395 346 C398 342.6,402 340.6,405.4 340"/><path d="M398 351 C399.6 348.4,401.6 346.4,403.6 345.4"/>
<path d="M441.6 330.4 C447 329,453 329,458.6 330.4"/><path d="M442.6 334.4 C447.6 334,453 335,458 337.4"/><path d="M444 338.4 C448.6 339,453 341.4,456.6 344.4"/><path d="M447 342.4 C449.6 343.6,451.4 345.4,452.6 347.4"/>
</g>
<!-- freckles -->
<g fill="#b9aa9f"><circle cx="412" cy="337" r="0.45"/><circle cx="414.6" cy="340" r="0.45"/><circle cx="411.6" cy="342" r="0.45"/><circle cx="435.4" cy="337" r="0.45"/><circle cx="433" cy="340" r="0.45"/><circle cx="436.4" cy="342" r="0.45"/></g>
</g>
<!-- selection -->
<g fill="none" stroke="#7fa3e8" stroke-width="1">
<rect x="299.5" y="261" width="248.5" height="139.6"/>
<path d="M423.6 239.6 V261" stroke-width="0.8" stroke="#9db8ee"/>
</g>
<g fill="#fff" stroke="#7f9fe4" stroke-width="0.9">
<circle cx="299.5" cy="261" r="2.2"/><circle cx="423.6" cy="261" r="2.2"/><circle cx="548" cy="261" r="2.2"/>
<circle cx="299.5" cy="330.8" r="2.2"/><circle cx="548" cy="330.8" r="2.2"/>
<circle cx="299.5" cy="400.6" r="2.2"/><circle cx="423.6" cy="400.6" r="2.2"/><circle cx="548" cy="400.6" r="2.2"/>
<circle cx="423.6" cy="239.6" r="2.2"/>
</g>
</svg>

<!-- ===== right panels ===== -->
<div class="a" id="rp"></div>

<div class="a tabbar" style="top:68.5px;height:19.5px"></div>
<div class="a grip" style="left:840px;top:71.5px;height:12.5px"></div>
<div class="t" style="left:857px;top:73.5px;color:#c9c9c9">カラー</div>
<div class="t" style="left:893px;top:73.5px;color:#c9c9c9">スウォッ</div>
<div class="a seltab" style="left:931px;top:70.8px;width:30.4px;height:14px"></div>
<div class="t" style="left:931px;top:73.3px;width:30.4px;text-align:center;font-weight:bold;color:#fff">境界線</div>
<div class="t" style="left:965.5px;top:73.5px;color:#c9c9c9">アピアラ</div>
<div class="a colbtn" style="left:1004.6px;top:72.8px"></div><svg style="left:1007.4px;top:76.2px" width="6" height="4.6" viewBox="0 0 6 4.6" fill="none" stroke="#f0f0f0" stroke-width="1.3"><path d="M0.6 0.5 L3 3.9 L5.4 0.5"/></svg>
<!-- style row -->
<div class="t lbl" style="left:840.3px;top:97.5px">スタイル:</div>
<div class="a grp" style="left:872.8px;top:93px;width:79.4px;height:17.8px"></div>
<svg style="left:876.6px;top:95.9px" width="11" height="11" viewBox="0 0 11 11" fill="none" stroke="#d8d8d8" stroke-width="1.15"><circle cx="5.5" cy="5.5" r="4.7"/><path d="M3.7 3.7 L7.3 7.3 M7.3 3.7 L3.7 7.3" stroke-width="1.2"/></svg>
<div class="a selb" style="left:893px;top:93px;width:17.8px;height:17.8px"></div>
<svg style="left:897px;top:97px" width="10" height="10" viewBox="0 0 10 10"><path d="M1 9 L9 1" stroke="#f4f4f4" stroke-width="1.5"/></svg>
<svg style="left:917.6px;top:97px" width="10" height="10" viewBox="0 0 10 10" fill="#d8d8d8"><circle cx="1.3" cy="8.3" r="0.85"/><circle cx="3.7" cy="6" r="0.85"/><circle cx="6" cy="3.8" r="0.85"/><circle cx="8.4" cy="1.7" r="0.85"/></svg>
<svg style="left:936.6px;top:96px" width="11" height="11" viewBox="0 0 11 11" fill="none" stroke="#d8d8d8" stroke-width="1.1"><g transform="rotate(-45 5.5 5.5)"><rect x="5.4" y="3.6" width="6" height="3.8" rx="1.9"/><rect x="-0.6" y="4" width="5.4" height="3" rx="1.5"/></g></svg>
<div class="a hr" style="top:114.2px"></div>
<!-- width row -->
<div class="t lbl" style="left:840.3px;top:119.7px">幅:</div>
<div class="a" style="left:873.8px;top:121.6px;width:101px;height:5.2px;border-radius:2.6px;background:#1f1f1f"></div>
<div class="a" style="left:873.8px;top:121.6px;width:36px;height:5.2px;border-radius:2.5px;background:#3578f6"></div>
<div class="a" style="left:906.6px;top:121.2px;width:6px;height:6px;border-radius:50%;background:#f2f2f2"></div>
<div class="a vbox" style="left:980px;top:119px;width:34.7px;height:11.4px"></div>
<div class="t" style="left:981.6px;top:119.9px;font-size:8.6px;color:#f0f0f0">6.5 pt</div>
<!-- cap row -->
<div class="t lbl" style="left:840.3px;top:136.7px">線端:</div>
<div class="a grp" style="left:872.8px;top:133.4px;width:58.6px;height:15.8px"></div>
<div class="a selb" style="left:872.8px;top:132.8px;width:19.4px;height:17px"></div>
<svg style="left:876.4px;top:137px" width="11.8" height="8.6" viewBox="0 0 13 10" fill="none" stroke="#d0d0d0" stroke-width="1.2"><path d="M0.6 1.2 H8 Q12.2 1.2 12.2 5 Q12.2 8.8 8 8.8 H0.6 Z"/><path d="M0.6 5 H7"/><circle cx="8.4" cy="5" r="1.4"/></svg>
<svg style="left:896.2px;top:137px" width="11.8" height="8.6" viewBox="0 0 13 10" fill="none" stroke="#d0d0d0" stroke-width="1.2"><rect x="0.6" y="1.2" width="8" height="7.6"/><path d="M0.6 5 H8.6"/><circle cx="10.4" cy="5" r="1.6"/></svg>
<svg style="left:916px;top:137px" width="11.8" height="8.6" viewBox="0 0 13 10" fill="none" stroke="#d0d0d0" stroke-width="1.2"><rect x="0.6" y="1.2" width="11.6" height="7.6"/><path d="M0.6 5 H7"/><circle cx="8.6" cy="5" r="1.4"/></svg>
<!-- join row -->
<div class="t lbl" style="left:840.3px;top:157.8px">結合:</div>
<div class="a grp" style="left:872.8px;top:153px;width:58.6px;height:16.8px"></div>
<div class="a selb" style="left:912.6px;top:153.4px;width:18.4px;height:16.2px"></div>
<svg style="left:877px;top:156.4px" width="10.4" height="10.4" viewBox="0 0 11 11" fill="none"><path d="M4.6 0.6 V4.6 Q4.6 6.6 6.6 6.6 H10.4" stroke="#9a9a9a" stroke-width="3.2"/><path d="M0.6 0.6 V2 Q0.6 10.4 9 10.4 H10.4" stroke="#e2e2e2" stroke-width="1"/></svg>
<svg style="left:896.8px;top:156.4px" width="10.4" height="10.4" viewBox="0 0 11 11" fill="none"><path d="M4.6 0.6 V4.6 Q4.6 6.6 6.6 6.6 H10.4" stroke="#9a9a9a" stroke-width="3.2"/><path d="M0.6 0.6 V4 L7 10.4 H10.4" stroke="#e2e2e2" stroke-width="1"/></svg>
<svg style="left:916.6px;top:156.4px" width="10.4" height="10.4" viewBox="0 0 11 11" fill="none"><path d="M4.6 0.6 V6.6 H10.4" stroke="#a4a4a4" stroke-width="3.2"/><path d="M0.6 0.6 V10.4 H10.4" stroke="#f2f2f2" stroke-width="1"/></svg>
<div class="t lbl" style="left:943.8px;top:157.8px">マイター:</div>
<div class="a vbox" style="left:980px;top:156.8px;width:34.7px;height:11.8px"></div>
<div class="t" style="left:982px;top:158px;font-size:8.6px;color:#f0f0f0">1</div>
<!-- align row -->
<div class="t lbl" style="left:840.3px;top:179.2px">整列:</div>
<div class="a grp" style="left:872.8px;top:175px;width:58.6px;height:16.6px"></div>
<div class="a selb" style="left:872.8px;top:174.6px;width:19.4px;height:17.4px"></div>
<svg style="left:877.4px;top:178px" width="11" height="11" viewBox="0 0 11 11"><path d="M0.6 10.4 V0.6 H10.4" fill="none" stroke="#f2f2f2" stroke-width="1.1"/><path d="M2.6 10.4 V2.6 H10.4 V5.6 H5.6 V10.4 Z" fill="#f2f2f2"/></svg>
<svg style="left:897px;top:178px" width="11" height="11" viewBox="0 0 11 11"><path d="M1 10.4 V1 H10.4 V6 H6 V10.4 Z" fill="#e2e2e2"/><path d="M3.4 10.4 V3.4 H10.4" fill="none" stroke="#2b2b2b" stroke-width="0.9"/></svg>
<svg style="left:916.6px;top:178px" width="11" height="11" viewBox="0 0 11 11"><path d="M1 10.4 V1 H10.4 V6 H6 V10.4 Z" fill="#e2e2e2"/><path d="M5.4 10.4 V5.4 H10.4" fill="none" stroke="#2b2b2b" stroke-width="0.9"/></svg>
<div class="a hr" style="top:196.6px"></div>
<!-- order row -->
<div class="t lbl" style="left:840.3px;top:204.2px">順序:</div>
<div class="a grp" style="left:872.8px;top:200.6px;width:38.2px;height:16.2px"></div>
<div class="a selb" style="left:892px;top:200.2px;width:19px;height:17px"></div>
<svg style="left:878px;top:204.4px" width="8.6" height="8.6" viewBox="0 0 10 10"><rect x="0.6" y="0.6" width="5.6" height="5.6" rx="0.8" fill="none" stroke="#e2e2e2" stroke-width="1"/><rect x="3.4" y="3.4" width="6.2" height="6.2" rx="0.8" fill="#e2e2e2"/></svg>
<svg style="left:897.4px;top:204.2px" width="8.6" height="8.6" viewBox="0 0 10 10"><rect x="3.4" y="3.4" width="5.8" height="5.8" rx="0.8" fill="none" stroke="#f2f2f2" stroke-width="1"/><rect x="0.8" y="0.8" width="5.8" height="5.8" rx="0.8" fill="#1d1d1d" stroke="#f2f2f2" stroke-width="1.1"/><rect x="2.6" y="2.6" width="2.2" height="2.2" fill="#f2f2f2"/></svg>
<div class="a" style="left:938px;top:205.2px;width:8px;height:8px;border-radius:1.5px;background:#222"></div>
<div class="t lbl" style="left:949.4px;top:204.2px">オブジェクトととも</div>
<div class="a hr" style="top:220.3px"></div>
<!-- start/end -->
<div class="t lbl" style="left:840.3px;top:228px">開始位置:</div>
<div class="a btn" style="left:875.8px;top:225px;width:39.4px;height:15.8px;background:#5a5a5a"></div>
<div class="a" style="left:886.2px;top:232.5px;width:17px;height:1.1px;background:#fff"></div>
<svg style="left:907.6px;top:229px" width="4" height="8" viewBox="0 0 4 8" fill="#f0f0f0"><path d="M2 0.4 L3.8 3 H0.2 Z M2 7.6 L3.8 5 H0.2 Z"/></svg>
<div class="a" style="left:918.8px;top:225px;width:40.6px;height:15.8px;border-radius:2.5px;background:#323232"></div><div class="t" style="left:920.6px;top:228px;font-size:8.4px;color:#6e6e6e">100 %</div>
<svg style="left:953px;top:231.4px" width="5" height="3.4" viewBox="0 0 5 3.4" fill="none" stroke="#6a6a6a" stroke-width="1.1"><path d="M0.6 0.5 L2.5 2.7 L4.4 0.5"/></svg>
<div class="t lbl" style="left:840.3px;top:248.8px">終了位置:</div>
<div class="a btn" style="left:875.8px;top:246px;width:39.4px;height:15.8px;background:#5a5a5a"></div>
<div class="a" style="left:881.2px;top:253.5px;width:17px;height:1.1px;background:#fff"></div>
<svg style="left:907.6px;top:250px" width="4" height="8" viewBox="0 0 4 8" fill="#f0f0f0"><path d="M2 0.4 L3.8 3 H0.2 Z M2 7.6 L3.8 5 H0.2 Z"/></svg>
<div class="a" style="left:918.8px;top:246px;width:40.6px;height:15.8px;border-radius:2.5px;background:#323232"></div><div class="t" style="left:920.6px;top:248.8px;font-size:8.4px;color:#6e6e6e">100 %</div>
<svg style="left:953px;top:252.2px" width="5" height="3.4" viewBox="0 0 5 3.4" fill="none" stroke="#6a6a6a" stroke-width="1.1"><path d="M0.6 0.5 L2.5 2.7 L4.4 0.5"/></svg>
<svg style="left:962.6px;top:234.4px" width="8" height="18" viewBox="0 0 8 18" fill="none" stroke="#b8b8b8" stroke-width="0.95"><path d="M0.5 0.6 H4.8 V2.6 M0.5 17.4 H4.8 V15.4"/><rect x="2.3" y="2.6" width="5" height="5.8" rx="1.6"/><rect x="2.3" y="9.6" width="5" height="5.8" rx="1.6"/><path d="M4.8 6.4 V11.6"/></svg>
<div class="a selb" style="left:975.6px;top:223.8px;width:20px;height:16.2px"></div>
<svg style="left:979.4px;top:226.8px" width="13" height="10.6" viewBox="0 0 13 10.6" fill="none" stroke="#f2f2f2" stroke-width="1.4"><path d="M0.8 1 L8.6 5.3 L0.8 9.6 M2.6 5.3 H8.6"/><circle cx="10.6" cy="5.3" r="1.6"/></svg>
<div class="a grp" style="left:997.8px;top:224px;width:17.6px;height:15.8px"></div><svg style="left:1000px;top:227px" width="12.6" height="10" viewBox="0 0 13.4 10.6" fill="none" stroke="#f2f2f2" stroke-width="1.1"><path d="M5 1 L0.8 5.3 L5 9.6"/><path d="M6 1.2 L12.4 5.3 L6 9.4 L3.6 5.3 Z"/><circle cx="6.6" cy="5.3" r="1" fill="#f2f2f2" stroke="none"/></svg>
<svg style="left:980.6px;top:248px" width="11.6" height="11" viewBox="0 0 11.6 11" fill="none" stroke="#e2e2e2" stroke-width="1.1"><path d="M0.6 3.2 H10.6 M7.8 0.6 L10.6 3.2 L7.8 5.8"/><path d="M11 7.8 H1 M3.8 5.2 L1 7.8 L3.8 10.4"/></svg>
<svg style="left:1000.8px;top:248.4px" width="9" height="11.4" viewBox="0 0 10 12" fill="none" stroke="#e2e2e2" stroke-width="1"><path d="M0.5 2.4 H9.5 M3.4 2.2 V0.8 H6.6 V2.2"/><path d="M1.4 2.6 L1.9 10.4 Q2 11.4 3 11.4 H7 Q8 11.4 8.1 10.4 L8.6 2.6"/><path d="M3.6 4.4 V9.6 M5 4.4 V9.6 M6.4 4.4 V9.6" stroke-width="0.8"/></svg>
<div class="a hr" style="top:265.6px"></div>
<div class="a btn" style="left:842px;top:277.4px;width:70px;height:11.8px;background:#555"></div>
<div class="t" style="left:842px;top:278.4px;width:70px;text-align:center;font-weight:bold;color:#f0f0f0">プロパティ...</div>
<div class="t lbl" style="left:954.3px;top:278.4px">筆圧:</div>
<div class="a" style="left:973.6px;top:277.4px;width:41px;height:10.8px;border-radius:2px;background:#6a6a6a"></div>


<div class="a" style="left:834.5px;top:299.4px;width:188px;height:1.2px;background:#1c1c1c"></div>
<div class="a tabbar" style="top:300.4px;height:21.2px"></div>
<div class="a grip" style="left:840px;top:305.4px;height:12.5px"></div>
<div class="a seltab" style="left:846.8px;top:305.2px;width:38.2px;height:13px"></div>
<div class="t" style="left:846.8px;top:307.2px;width:38.2px;text-align:center;font-weight:bold;color:#fff">レイヤー</div>
<div class="t" style="left:897.4px;top:307.4px;color:#c9c9c9">パス</div>
<div class="t" style="left:928.6px;top:307.4px;color:#c9c9c9">エフェク</div>
<div class="t" style="left:968.9px;top:307.4px;color:#c9c9c9">スタイル</div>
<div class="a colbtn" style="left:1004.6px;top:306px"></div><svg style="left:1007.4px;top:309.4px" width="6" height="4.6" viewBox="0 0 6 4.6" fill="none" stroke="#f0f0f0" stroke-width="1.3"><path d="M0.6 0.5 L3 3.9 L5.4 0.5"/></svg>
<!-- opacity row -->
<div class="t lbl" style="left:837.8px;top:329px;letter-spacing:-0.15px">不透明度:</div>
<div class="a vbox" style="left:871.4px;top:327px;width:39.4px;height:13.6px;background:#1e1e1e"></div>
<div class="t" style="left:873.6px;top:328.9px;font-size:8.1px;color:#f4f4f4">100 %</div>
<div class="a" style="left:902.6px;top:327px;width:1px;height:13.6px;background:#363636"></div>
<svg style="left:904.9px;top:332.4px" width="4.4" height="3.2" viewBox="0 0 5 3.6" fill="none" stroke="#e0e0e0" stroke-width="1.6"><path d="M0.6 0.5 L2.5 2.8 L4.4 0.5"/></svg>
<div class="a btn" style="left:914px;top:327px;width:74.6px;height:13.6px;background:#5a5a5a;border-radius:3px"></div>
<div class="t" style="left:917.6px;top:329px;color:#f0f0f0">標準</div>
<svg style="left:981px;top:329.6px" width="4" height="8.4" viewBox="0 0 4 8.4" fill="#e6e6e6"><path d="M2 0.4 L3.8 3.2 H0.2 Z M2 8 L3.8 5.2 H0.2 Z"/></svg>
<svg style="left:993.4px;top:329.2px" width="9.6" height="9.6" viewBox="0 0 12 12"><g fill="#dcdcdc"><circle cx="6" cy="6" r="3.9"/><rect x="5" y="0.2" width="2" height="11.6" rx="0.5"/><rect x="5" y="0.2" width="2" height="11.6" rx="0.5" transform="rotate(45 6 6)"/><rect x="5" y="0.2" width="2" height="11.6" rx="0.5" transform="rotate(90 6 6)"/><rect x="5" y="0.2" width="2" height="11.6" rx="0.5" transform="rotate(135 6 6)"/></g><circle cx="6" cy="6" r="1.7" fill="#363636"/></svg>
<svg style="left:1008.8px;top:328.6px" width="6.6" height="9.4" viewBox="0 0 7.4 10.4"><rect x="0.4" y="4.6" width="6.6" height="5.4" rx="0.8" fill="#d8d8d8"/><path d="M1.8 4.8 V2.8 A1.9 1.9 0 0 1 5.6 2.8 V4.8" fill="none" stroke="#d8d8d8" stroke-width="1"/></svg>
<!-- layer list -->
<div class="a" style="left:834.5px;top:343px;width:188px;height:106.6px;background:#1c1c1c"></div>
<div class="a" style="left:834.5px;top:346px;width:188px;height:25.8px;background:#3063c6"></div>
<div class="a" style="left:845.8px;top:346px;width:26.8px;height:25.8px;background:#202020"></div>
<div class="a" style="left:846.8px;top:351.6px;width:25.3px;height:14.4px;background:#fff"></div>
<svg style="left:836.6px;top:354.6px" width="7" height="7" viewBox="0 0 12 12" fill="#c7b35a" opacity="0.7"><path d="M7 1.6 L8.2 4.9 L11.6 6.2 L8.2 7.5 L7 11 L5.8 7.5 L2.4 6.2 L5.8 4.9 Z"/><path d="M2.6 0.3 L3.1 1.9 L4.7 2.4 L3.1 2.9 L2.6 4.5 L2.1 2.9 L0.5 2.4 L2.1 1.9 Z"/></svg>
<svg style="left:853.6px;top:352.2px" width="12" height="13.8" viewBox="369 268 118 133"><path d="M389.9 273 C382 280,382 300,385.4 312.5 L409 291 Z M459.2 270 C467 280,466 296,464.3 308 L437.4 291 Z" fill="#e8bd78"/><path d="M384.6 312 C391 298,407 290,423.5 290 C440 290,457 297,464.5 309 C477 328,480 345,472.6 358.6 L483 401 L370 401 L382.5 358.6 C374 345,376 328,384.6 312 Z" fill="#e8bd78"/><path d="M381.6 340 C381 326,405 322,423 318 C442 322,469 326,469 339.4 C470 360,452 378,450 384 L455 401 L398 401 L402 384 C392 370,382 356,381.6 340 Z" fill="#fbf5ea"/><ellipse cx="424" cy="333" rx="7" ry="6" fill="#3a2a24"/></svg>
<div class="t" style="left:879.8px;top:354px;font-size:7.9px;color:#f4f4f4">A high-quality professional...</div>
<div class="a" style="left:999px;top:346px;width:1px;height:25.8px;background:#2957b2"></div>
<svg style="left:1006.4px;top:355.4px" width="8" height="5.4" viewBox="0 0 8 5.4"><path d="M0.3 2.7 Q4 -1.6 7.7 2.7 Q4 7 0.3 2.7 Z" fill="#eef2fb"/><circle cx="4" cy="2.7" r="1.1" fill="#3063c6"/></svg>
<!-- bottom toolbar -->
<div class="a" style="left:834.5px;top:449.6px;width:188px;height:24.4px;background:#363636"></div>
<svg style="left:839.6px;top:457.4px" width="11" height="11" viewBox="0 0 11 11" fill="none" stroke="#dcdcdc" stroke-width="1"><path d="M5.4 1.4 H1.6 Q0.6 1.4 0.6 2.4 V9.4 Q0.6 10.4 1.6 10.4 H8.6 Q9.6 10.4 9.6 9.4 V5.6"/><path d="M4 7 L4.4 5.2 L9 0.6 L10.4 2 L5.8 6.6 Z" stroke-width="0.9"/></svg>
<svg style="left:877px;top:457.2px" width="11.4" height="11.4" viewBox="0 0 11.4 11.4"><rect x="0" y="0" width="11.4" height="11.4" rx="1.2" fill="#ececec"/><path d="M2 9.4 V2.4 H5.2 M2 5.8 H4.6 M5.8 2.4 L9.6 9.4 M9.6 2.4 L5.8 9.4" fill="none" stroke="#2a2a2a" stroke-width="1.15"/></svg>
<svg style="left:892.6px;top:457.2px" width="11.4" height="11.4" viewBox="0 0 11.4 11.4"><rect width="11.4" height="11.4" rx="0.8" fill="#ececec"/><circle cx="5.7" cy="5.7" r="3.5" fill="#2a2a2a"/></svg>
<svg style="left:908.6px;top:457.2px" width="10.4" height="11.4" viewBox="0 0 10.4 11.4"><path d="M0 0 H10.4 V1 Q10.4 3.6 6.6 5.7 Q10.4 7.8 10.4 10.4 V11.4 H0 V10.4 Q0 7.8 3.8 5.7 Q0 3.6 0 1 Z" fill="#ececec"/></svg>
<svg style="left:923.6px;top:457px" width="11.8" height="11.8" viewBox="0 0 11.8 11.8"><circle cx="5.9" cy="5.9" r="5.3" fill="#2a2a2a" stroke="#ececec" stroke-width="1.1"/><path d="M9.65 2.15 A5.3 5.3 0 0 0 2.15 9.65 Z" fill="#ececec"/></svg>
<svg style="left:957.6px;top:457px" width="11.8" height="11.8" viewBox="0 0 11.8 11.8"><rect x="0.5" y="0.5" width="10.8" height="10.8" rx="1" fill="none" stroke="#dcdcdc" stroke-width="1"/><circle cx="4.8" cy="4.8" r="2.9" fill="#dcdcdc"/><circle cx="7.2" cy="7.2" r="2.7" fill="#363636" stroke="#dcdcdc" stroke-width="0.9"/></svg>
<svg style="left:973.6px;top:457.4px" width="12.4" height="11" viewBox="0 0 12.4 11" fill="none" stroke="#dcdcdc" stroke-width="1"><path d="M0.6 10.4 V1.6 Q0.6 0.6 1.6 0.6 H4.4 L5.6 2.2 H10.8 Q11.8 2.2 11.8 3.2 V10.4 Z"/><path d="M0.6 3.8 H11.8"/></svg>
<svg style="left:989.6px;top:457.2px" width="11.4" height="11.4" viewBox="0 0 5 5" fill="#e4e4e4" shape-rendering="crispEdges"><path d="M0 0h1v1h-1zM2 0h1v1h-1zM4 0h1v1h-1zM1 1h1v1h-1zM3 1h1v1h-1zM0 2h1v1h-1zM2 2h1v1h-1zM4 2h1v1h-1zM1 3h1v1h-1zM3 3h1v1h-1zM0 4h1v1h-1zM2 4h1v1h-1zM4 4h1v1h-1z"/></svg>
<svg style="left:1006px;top:456.8px" width="10" height="12" viewBox="0 0 10 12" fill="none" stroke="#dcdcdc" stroke-width="1"><path d="M0.5 2.4 H9.5 M3.4 2.2 V0.8 H6.6 V2.2"/><path d="M1.4 2.6 L1.9 10.4 Q2 11.4 3 11.4 H7 Q8 11.4 8.1 10.4 L8.6 2.6"/><path d="M3.6 4.4 V9.6 M5 4.4 V9.6 M6.4 4.4 V9.6" stroke-width="0.8"/></svg>


<div class="a tabbar" style="top:474px;height:21.2px"></div>
<div class="a grip" style="left:840px;top:478.6px;height:12.5px"></div>
<div class="a seltab" style="left:847.4px;top:478.6px;width:23.2px;height:12.4px"></div>
<div class="t" style="left:847.4px;top:480.2px;width:23.2px;text-align:center;font-weight:bold;color:#fff">変形</div>
<div class="t" style="left:875.8px;top:480.4px;color:#c9c9c9">ナビゲータ</div>
<div class="t" style="left:920px;top:480.4px;color:#c9c9c9">履歴</div>
<div class="a colbtn" style="left:1004.4px;top:479.6px"></div><svg style="left:1007.1999999999999px;top:483.0px" width="6" height="4.6" viewBox="0 0 6 4.6" fill="none" stroke="#f0f0f0" stroke-width="1.3"><path d="M0.6 0.5 L3 3.9 L5.4 0.5"/></svg>
<!-- anchor grid -->
<div class="a" style="left:849.6px;top:516.4px;width:22px;height:22px;background:#6a6a6a"></div>
<div class="a" style="left:845px;top:511.8px;width:7.2px;height:7.2px;background:#fff"></div>
<div class="a" style="left:845.6px;top:524.2px;width:3.8px;height:3.8px;background:#a6a6a6"></div><div class="a" style="left:845.6px;top:535.9px;width:3.8px;height:3.8px;background:#a6a6a6"></div><div class="a" style="left:857.4px;top:512.4px;width:3.8px;height:3.8px;background:#a6a6a6"></div><div class="a" style="left:857.4px;top:524.2px;width:3.8px;height:3.8px;background:#a6a6a6"></div><div class="a" style="left:857.4px;top:535.9px;width:3.8px;height:3.8px;background:#a6a6a6"></div><div class="a" style="left:869.1px;top:512.4px;width:3.8px;height:3.8px;background:#a6a6a6"></div><div class="a" style="left:869.1px;top:524.2px;width:3.8px;height:3.8px;background:#a6a6a6"></div><div class="a" style="left:869.1px;top:535.9px;width:3.8px;height:3.8px;background:#a6a6a6"></div>
<div class="t lbl" style="left:889.8px;top:508.2px;font-size:8.2px">X:</div>
<div class="a vbox" style="left:901.2px;top:505.6px;width:41.6px;height:12.2px"></div><div class="t" style="left:903.2px;top:507.0px;font-size:8.3px;color:#f4f4f4">67.2 mm</div>
<div class="t lbl" style="left:889.8px;top:523.8px;font-size:8.2px">Y:</div>
<div class="a vbox" style="left:901.2px;top:521.4px;width:41.6px;height:11.8px"></div><div class="t" style="left:903.2px;top:522.8px;font-size:8.3px;color:#f4f4f4">53.1 mm</div>
<div class="t lbl" style="left:950.6px;top:508.2px;font-size:8.2px">W:</div>
<div class="a vbox" style="left:963.4px;top:505.6px;width:42px;height:12.2px"></div><div class="t" style="left:965.4px;top:507.0px;font-size:8.3px;color:#f4f4f4">162.6 mm</div>
<div class="t lbl" style="left:952.6px;top:523.8px;font-size:8.2px">H:</div>
<div class="a vbox" style="left:963.4px;top:521.4px;width:42px;height:11.8px"></div><div class="t" style="left:965.4px;top:522.8px;font-size:8.3px;color:#f4f4f4">91.4 mm</div>
<div class="t lbl" style="left:889.8px;top:542.6px;font-size:8.2px">R:</div>
<div class="a vbox" style="left:901.2px;top:540px;width:41.6px;height:12.2px"></div><div class="t" style="left:903.2px;top:541.4px;font-size:8.3px;color:#f4f4f4">0 °</div><svg style="left:936.5px;top:544.6px" width="4.4" height="3.2" viewBox="0 0 5 3.6" fill="none" stroke="#e0e0e0" stroke-width="1.6"><path d="M0.6 0.5 L2.5 2.8 L4.4 0.5"/></svg>
<div class="t lbl" style="left:952.6px;top:542.6px;font-size:8.2px">S:</div>
<div class="a vbox" style="left:963.4px;top:540px;width:42px;height:12.2px"></div><div class="t" style="left:965.4px;top:541.4px;font-size:8.3px;color:#f4f4f4">0 °</div><svg style="left:999.1px;top:544.6px" width="4.4" height="3.2" viewBox="0 0 5 3.6" fill="none" stroke="#e0e0e0" stroke-width="1.6"><path d="M0.6 0.5 L2.5 2.8 L4.4 0.5"/></svg>
<div class="a" style="left:933.6px;top:540px;width:1px;height:12.2px;background:#363636"></div>
<div class="a" style="left:996.2px;top:540px;width:1px;height:12.2px;background:#363636"></div>
<svg style="left:1010px;top:511.6px" width="7" height="15.4" viewBox="0 0 7 15.4" fill="none" stroke="#b4b4b4" stroke-width="0.95"><rect x="0.9" y="0.6" width="5.2" height="6" rx="1.7"/><rect x="0.9" y="8.8" width="5.2" height="6" rx="1.7"/><path d="M3.5 4.4 V11"/></svg>
<svg style="left:981.6px;top:558.4px" width="11" height="11" viewBox="0 0 11 11"><path d="M3.4 0.6 H10.4 V7.6" fill="none" stroke="#dcdcdc" stroke-width="1" stroke-dasharray="2.2 1.2"/><path d="M0.6 3 V10.4 H8" fill="none" stroke="#dcdcdc" stroke-width="1"/><rect x="1.2" y="4.4" width="5.4" height="5.4" rx="0.6" fill="#f0f0f0"/></svg>
<svg style="left:999.7px;top:562.4px" width="4.4" height="3.2" viewBox="0 0 5 3.6" fill="none" stroke="#d0d0d0" stroke-width="1.6"><path d="M0.6 0.5 L2.5 2.8 L4.4 0.5"/></svg>

<div class="a" style="left:1020.9px;top:68px;width:1.7px;height:512px;background:#454545"></div>
</div>
</body>
</html>
